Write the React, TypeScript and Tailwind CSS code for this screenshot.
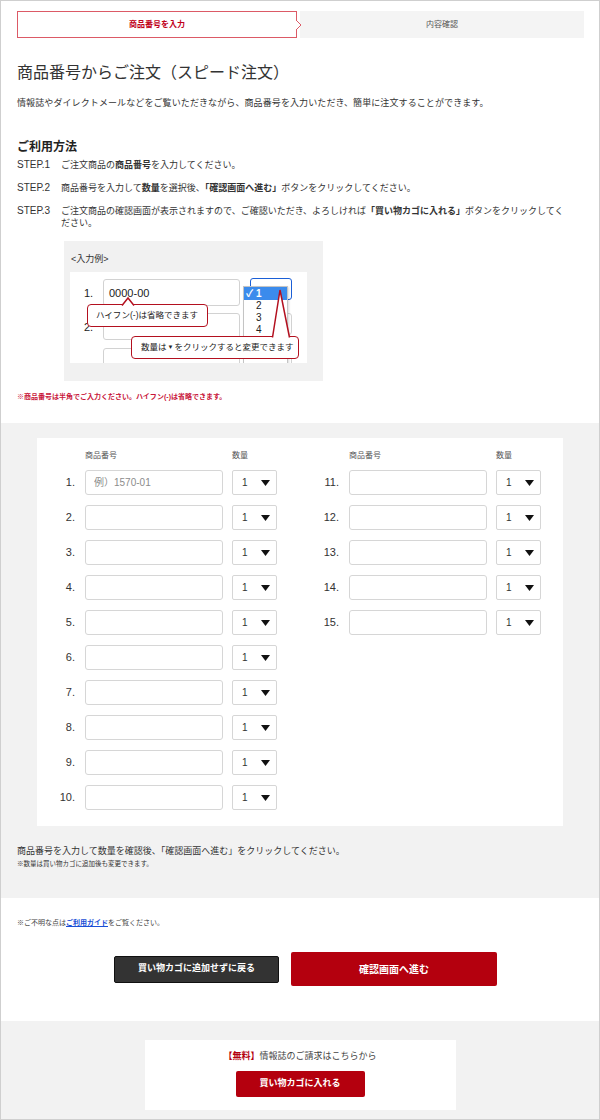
import React from 'react';

const FONT = "font-['Liberation_Sans','Noto_Sans_CJK_JP',sans-serif]";

const Caret: React.FC = () => (
  <svg width="9" height="6" viewBox="0 0 9 6">
    <polygon points="0,0 9,0 4.5,6" fill="#111" />
  </svg>
);

const Row: React.FC<{ n: number; placeholder?: string }> = ({ n, placeholder }) => (
  <div className="flex items-center h-[25px]">
    <div className="w-[36px] pr-[10px] text-right text-[11px] text-[#333]">{n}.</div>
    <input
      readOnly
      placeholder={placeholder}
      className="w-[138px] h-[25px] border border-[#d6d6d6] rounded-[3px] bg-white px-[8px] text-[10px] outline-none placeholder:text-[#8c8c8c]"
    />
    <div className="ml-[9px] w-[45px] h-[25px] border border-[#d6d6d6] rounded-[2px] bg-white flex items-center justify-between pl-[9px] pr-[6px] text-[10px]">
      <span>1</span>
      <Caret />
    </div>
  </div>
);

const Column: React.FC<{ from: number; to: number }> = ({ from, to }) => {
  const nums: number[] = [];
  for (let i = from; i <= to; i++) nums.push(i);
  return (
    <div>
      <div className="flex ml-[36px] mb-[8px] text-[8px] leading-[12px] text-[#555]">
        <div className="w-[147px]">商品番号</div>
        <div>数量</div>
      </div>
      <div className="flex flex-col gap-[10px]">
        {nums.map((n) => (
          <Row key={n} n={n} placeholder={n === 1 ? '例）1570-01' : undefined} />
        ))}
      </div>
    </div>
  );
};

// the little screenshot inside <入力例>
const Example: React.FC = () => (
  <div className="relative w-[237px] h-[91px] bg-white overflow-hidden text-[#222]">
    <div className="absolute left-[14px] top-[15px] text-[11px] leading-[12px]">1.</div>
    <div className="absolute left-[33px] top-[7px] w-[137px] h-[27px] border border-[#d2d2d2] rounded-[3px]" />
    <div className="absolute left-[39px] top-[15px] text-[11px] leading-[12px]">0000-00</div>
    <div className="absolute left-[14px] top-[49px] text-[11px] leading-[12px]">2.</div>
    <div className="absolute left-[33px] top-[41px] w-[137px] h-[27px] border border-[#d2d2d2] rounded-[3px]" />
    <div className="absolute left-[33px] top-[76px] w-[137px] h-[27px] border border-[#d2d2d2] rounded-[3px]" />

    <div className="absolute left-[180px] top-[6px] w-[42px] h-[22px] border-[1.5px] border-[#1b5fd6] rounded-[3px]" />
    <div className="absolute left-[180px] top-[41px] w-[42px] h-[22px] border border-[#d2d2d2] rounded-[3px]" />
    <div className="absolute left-[180px] top-[76px] w-[42px] h-[22px] border border-[#d2d2d2] rounded-[3px]" />

    <div className="absolute left-[173px] top-[14px] w-[45px] h-[80px] bg-white border border-[#c4c4c4] shadow-[1px_1px_2px_rgba(0,0,0,0.15)] text-[10px]">
      <div className="h-[13px] bg-[#3b8bec] text-white leading-[13px] pl-[2px] font-bold">✓ 1</div>
      <div className="h-[12px] leading-[12px] pl-[12px]">2</div>
      <div className="h-[12px] leading-[12px] pl-[12px]">3</div>
      <div className="h-[12px] leading-[12px] pl-[12px]">4</div>
    </div>

    <div className="absolute left-[17px] top-[32px] w-[121px] h-[23px] bg-white border-[1.5px] border-[#b3101f] rounded-[4px] flex items-center pl-[8px] text-[8.5px] whitespace-nowrap">
      ハイフン(-)は省略できます
    </div>
    <div className="absolute left-[61px] top-[64px] w-[168px] h-[23px] bg-white border-[1.5px] border-[#b3101f] rounded-[4px] flex items-center pl-[9px] text-[8.5px] whitespace-nowrap">
      数量は<span className="text-[6px] mx-[1px]">▼</span>をクリックすると変更できます
    </div>
    <svg className="absolute left-0 top-0" width="237" height="91">
      <path d="M52 33.5 L58 26 L64 33.5" fill="#fff" stroke="#b3101f" strokeWidth="1.5" />
      <path d="M202.5 65.5 L210 18 L219.5 65.5" fill="#fff" stroke="#b3101f" strokeWidth="1.5" />
    </svg>
  </div>
);

const App: React.FC = () => {
  return (
    <div className={`w-[600px] min-h-[1120px] flex flex-col border border-[#cfcfcf] bg-white text-[#333] ${FONT}`}>
      <div className="pl-[16px] pr-[15px] pt-[10px]">
        {/* steps */}
        <div className="flex h-[27px]">
          <div className="relative w-[280px] border border-[#dc5a66] bg-white flex items-center justify-center text-[8px] font-bold text-[#c0001a]">
            商品番号を入力
            <svg className="absolute right-[-6px] top-[8px]" width="6" height="10" viewBox="0 0 6 10">
              <path d="M0 0 L5 5 L0 10" fill="#fff" stroke="#dc5a66" strokeWidth="1" />
            </svg>
          </div>
          <div className="ml-[3px] flex-1 bg-[#f4f4f4] flex items-center justify-center text-[8px] text-[#555]">
            内容確認
          </div>
        </div>

        <h1 className="mt-[23px] text-[16px] leading-[24px] text-[#333]">商品番号からご注文（スピード注文）</h1>
        <p className="mt-[12px] text-[9px] leading-[12px] tracking-[0.1px]">
          情報誌やダイレクトメールなどをご覧いただきながら、商品番号を入力いただき、簡単に注文することができます。
        </p>

        <h2 className="mt-[30px] text-[12px] leading-[16px] font-bold text-[#222]">ご利用方法</h2>
        <div className="mt-[4px] flex flex-col gap-[11px] text-[9px] leading-[12px]">
          <div className="flex">
            <div className="w-[44px] shrink-0 text-[10px]">STEP.1</div>
            <div>ご注文商品の<b>商品番号</b>を入力してください。</div>
          </div>
          <div className="flex">
            <div className="w-[44px] shrink-0 text-[10px]">STEP.2</div>
            <div>商品番号を入力して<b>数量</b>を選択後、<b>「確認画面へ進む」</b>ボタンをクリックしてください。</div>
          </div>
          <div className="flex">
            <div className="w-[44px] shrink-0 text-[10px]">STEP.3</div>
            <div>
              ご注文商品の確認画面が表示されますので、ご確認いただき、よろしければ<b>「買い物カゴに入れる」</b>ボタンをクリックしてく
              <br />
              ださい。
            </div>
          </div>
        </div>

        <div className="mt-[12px] ml-[47px] w-[259px] h-[140px] bg-[#f1f1f1] pt-[12px] pl-[6px]">
          <div className="text-[9px] leading-[12px] pl-[1px]">&lt;入力例&gt;</div>
          <div className="mt-[7px]">
            <Example />
          </div>
        </div>

        <p className="mt-[10px] mb-[20px] text-[7px] leading-[12px] font-bold text-[#c8153a]">
          ※商品番号は半角でご入力ください。ハイフン(-)は省略できます。
        </p>
      </div>

      {/* form */}
      <div className="bg-[#f2f2f2] pl-[16px] pt-[15px] pb-[29px]">
        <div className="ml-[20px] w-[526px] bg-white pt-[12px] pb-[16px] pl-[12px] flex gap-[36px]">
          <Column from={1} to={10} />
          <Column from={11} to={15} />
        </div>
        <p className="mt-[19px] text-[9px] leading-[12px]">
          商品番号を入力して数量を確認後、「確認画面へ進む」をクリックしてください。
        </p>
        <p className="mt-[2px] text-[6.5px] leading-[10px]">※数量は買い物カゴに追加後も変更できます。</p>
      </div>

      {/* actions */}
      <div className="bg-white pl-[16px] pt-[20px] pb-[35px]">
        <p className="text-[7px] leading-[10px] text-[#444]">
          ※ご不明な点は<a className="text-[#1a4fd6] underline font-bold">ご利用ガイド</a>をご覧ください。
        </p>
        <div className="mt-[24px] flex items-center justify-center gap-[12px]">
          <button className="ml-[-5px] w-[165px] h-[27px] bg-[#333] border border-[#111] rounded-[2px] text-white text-[9px] font-bold">
            買い物カゴに追加せずに戻る
          </button>
          <button className="w-[206px] h-[34px] bg-[#b4000e] rounded-[2px] text-white text-[10px] font-bold">
            確認画面へ進む
          </button>
        </div>
      </div>

      {/* footer */}
      <div className="flex-1 bg-[#f2f2f2] pt-[19px] pb-[8px] flex justify-center">
        <div className="w-[311px] h-[70px] bg-white pt-[10px] flex flex-col items-center">
          <p className="text-[9px] leading-[12px] text-[#444]">
            <span className="text-[#b4000e] font-bold">【無料】</span>情報誌のご請求はこちらから
          </p>
          <button className="mt-[9px] w-[129px] h-[26px] bg-[#b4000e] rounded-[2px] text-white text-[9px] font-bold">
            買い物カゴに入れる
          </button>
        </div>
      </div>
    </div>
  );
};

export default App;
